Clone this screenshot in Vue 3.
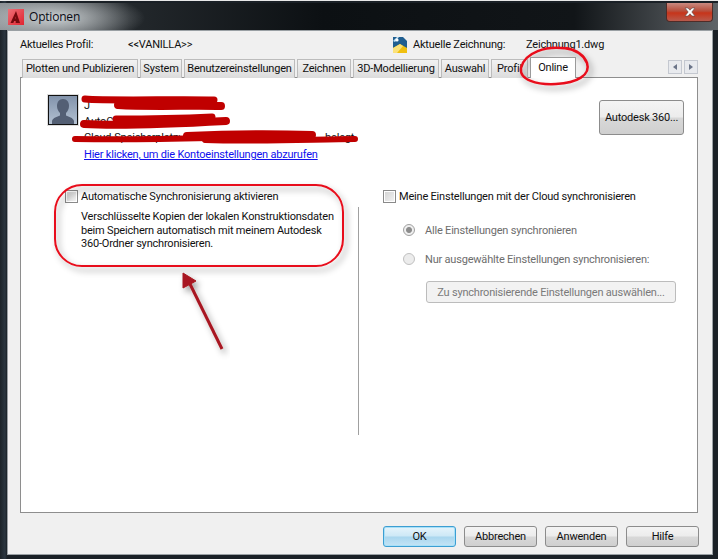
<script setup>
const tabs = [
  { label: 'Plotten und Publizieren', width: 116 },
  { label: 'System', width: 42 },
  { label: 'Benutzereinstellungen', width: 111 },
  { label: 'Zeichnen', width: 54 },
  { label: '3D-Modellierung', width: 86 },
  { label: 'Auswahl', width: 48 },
  { label: 'Profil', width: 37 },
]

const footerButtons = ['OK', 'Abbrechen', 'Anwenden', 'Hilfe']
</script>

<template>
  <div class="window">
    <header class="titlebar">
      <div class="titlebar__brand">
        <svg class="app-icon" width="16" height="16" viewBox="0 0 16 16">
          <defs>
            <linearGradient id="appGlow" x1="0" y1="0" x2="1" y2="1">
              <stop offset="0" stop-color="#ee7078" />
              <stop offset="1" stop-color="#e02430" />
            </linearGradient>
          </defs>
          <rect width="16" height="16" fill="url(#appGlow)" />
          <path d="M8 2 2.500 14h2.800l.9-2h1.500v2h4.300L8 2Zm-.3 7.500H7l.7-2Z" fill="#74090e" />
        </svg>
        <span class="titlebar__text">Optionen</span>
      </div>
      <button type="button" class="close-btn" aria-label="Schließen">
        <svg width="14" height="10" viewBox="0 0 14 10">
          <path d="M2 1h3l2 2.200L9 1h3L8.800 5 12 9H9L7 6.800 5 9H2l3.200-4Z" fill="#fff" stroke="#5a4a4a" stroke-width=".6" />
        </svg>
      </button>
    </header>

    <div class="client">
      <div class="info-row">
        <span class="info-row__profile-label">Aktuelles Profil:</span>
        <span class="info-row__profile">&lt;&lt;VANILLA&gt;&gt;</span>
        <svg class="drawing-icon" width="16" height="17" viewBox="0 0 16 17">
          <path d="M1 1h10l4 4v7H1z" fill="#215f90" />
          <path d="M1 5 5 1h2L3 6z" fill="#b9dcf0" />
          <circle cx="5" cy="4" r="1.600" fill="#fff" />
          <path d="M1 12 8 8l7 4v5H1z" fill="#f0c010" />
          <path d="M1 12 8 8l3 2-6 7H1z" fill="#fbe27a" />
        </svg>
        <span class="info-row__drawing-label">Aktuelle Zeichnung:</span>
        <span>Zeichnung1.dwg</span>
      </div>

      <div class="tabs">
        <div v-for="tab in tabs" :key="tab.label" class="tab" :style="{ width: tab.width + 'px' }">{{ tab.label }}</div>
        <div class="tab tab--active">Online</div>
        <div class="tab-scroll">
          <span class="tab-scroll__btn"><i class="tri tri--left"></i></span>
          <span class="tab-scroll__btn"><i class="tri tri--right"></i></span>
        </div>
      </div>

      <main class="panel">
        <section class="account">
          <div class="avatar">
            <svg width="28" height="28" viewBox="0 0 28 28">
              <defs>
                <linearGradient id="avatarBg" x1="0" y1="0" x2="0" y2="1">
                  <stop offset="0" stop-color="#8293ab" />
                  <stop offset="1" stop-color="#b3c1d2" />
                </linearGradient>
              </defs>
              <rect width="28" height="28" fill="url(#avatarBg)" />
              <path d="M14 3c-4 0-6 3-6 7 0 3 1.500 5.500 3 7v2.500c-3 1.500-7 2-8 5.500v3h22v-3c-1-3.500-5-4-8-5.500V17c1.500-1.500 3-4 3-7 0-4-2-7-6-7Z" fill="#535f74" />
            </svg>
          </div>
          <div class="account__copy">
            <p class="account__line">J</p>
            <p class="account__line">AutoCAD</p>
            <p class="account__line">Cloud-Speicherplatz: <span class="account__tail">belegt</span></p>
            <a class="account__link" href="#">Hier klicken, um die Kontoeinstellungen abzurufen</a>
          </div>
          <button type="button" class="btn btn--account">Autodesk 360...</button>
        </section>

        <section class="columns">
          <div class="col col--left">
            <label class="check">
              <span class="check__box"></span>
              Automatische Synchronisierung aktivieren
            </label>
            <p class="col__desc">
              Verschlüsselte Kopien der lokalen Konstruktionsdaten<br />
              beim Speichern automatisch mit meinem Autodesk<br />
              360-Ordner synchronisieren.
            </p>
          </div>
          <div class="divider"></div>
          <div class="col col--right">
            <label class="check">
              <span class="check__box"></span>
              Meine Einstellungen mit der Cloud synchronisieren
            </label>
            <div class="radio-row radio-row--first">
              <span class="radio radio--on"></span>
              Alle Einstellungen synchronieren
            </div>
            <div class="radio-row">
              <span class="radio"></span>
              Nur ausgewählte Einstellungen synchronisieren:
            </div>
            <button type="button" class="btn btn--disabled">Zu synchronisierende Einstellungen auswählen...</button>
          </div>
        </section>
      </main>

      <footer class="footer">
        <button
          v-for="(label, i) in footerButtons"
          :key="label"
          type="button"
          class="btn btn--footer"
          :class="{ 'btn--default': i === 0 }"
        >{{ label }}</button>
      </footer>
    </div>

    <svg class="markup" width="718" height="559" viewBox="0 0 718 559">
      <defs>
        <filter id="markupShadow" x="-20%" y="-20%" width="140%" height="140%">
          <feDropShadow dx="3" dy="4" stdDeviation="3" flood-color="#000" flood-opacity=".38" />
        </filter>
      </defs>
      <g fill="none" stroke="#c00000" stroke-linecap="round" stroke-linejoin="round">
        <path d="M85 98C110 100 180 98 214 99" stroke-width="7" />
        <path d="M118 104C150 106 195 104 221 105" stroke-width="8" />
        <path d="M84 123C120 125 170 123 226 120" stroke-width="8" />
        <path d="M116 118C150 118 190 117 212 116" stroke-width="7" />
        <path d="M75 138C130 139 170 138 210 137" stroke-width="6" />
        <path d="M187 135C230 133 280 133 312 134" stroke-width="8" />
        <path d="M205 139C260 141 320 138 355 138" stroke-width="6" />
      </g>
      <g filter="url(#markupShadow)" fill="none" stroke="#e8101c">
        <rect x="55" y="184" width="288" height="81" rx="27" stroke-width="2" />
        <path d="M574 49C545 42 524 53 521 67C519 79 537 84 556 83C577 82 591 74 587 62C584 54 576 49 566 47" stroke-width="2.500" />
      </g>
      <g filter="url(#markupShadow)">
        <path d="M222 348 190 283" stroke="#a81820" stroke-width="3" fill="none" />
        <path d="M183 272 183 287 196 280Z" fill="#a81820" stroke="#a81820" />
      </g>
    </svg>
  </div>
</template>

<style>
html,
body {
  margin: 0;
  background: #20262c;
}
</style>

<style scoped>
.window {
  position: relative;
  width: 718px;
  height: 559px;
  display: flex;
  flex-direction: column;
  overflow: hidden;
  box-sizing: border-box;
  padding: 2px 5px 4px 7px;
  background: linear-gradient(90deg, #1c2329 0, #2b3640 5px, #1a2026 7px);
  border-top: 1px solid #e8e8e8;
  font-family: Roboto, "Liberation Sans", Arial, sans-serif;
  font-size: 11px;
  letter-spacing: -0.2px;
  color: #111;
}

.titlebar {
  flex: none;
  height: 27px;
  margin: 0 -5px 0 -7px;
  padding: 0 5px 0 8px;
  display: flex;
  align-items: flex-start;
  justify-content: space-between;
  background:
    radial-gradient(ellipse 90px 26px at 55px 15px, rgba(215, 220, 222, .9), rgba(215, 220, 222, 0) 100%),
    linear-gradient(90deg, #7f8488 0, #23282c 18%, #0c1013 45%, #111518 80%, #5f6468 100%);
}

.titlebar__brand {
  display: flex;
  align-items: center;
  gap: 5px;
  height: 25px;
  padding-top: 1px;
}

.titlebar__text {
  font-family: "Open Sans", sans-serif;
  font-size: 12px;
  color: #0a0a14;
}

.close-btn {
  width: 47px;
  height: 19px;
  margin: 0;
  padding: 0;
  display: grid;
  place-items: center;
  border: 1px solid #4f2c28;
  border-top: 0;
  border-radius: 0 0 4px 4px;
  background: linear-gradient(#c98a80 0, #b84d3a 45%, #c7341a 55%, #b85a4c 100%);
}

.client {
  flex: 1;
  min-height: 0;
  display: flex;
  flex-direction: column;
  border: 1px solid #9aa0a4;
  background: #f0f0f0;
  padding: 0 14px 0 12px;
}

.info-row {
  flex: none;
  height: 27px;
  display: flex;
  align-items: center;
}

.info-row__profile-label {
  width: 108px;
}

.info-row__profile {
  width: 264px;
}

.drawing-icon {
  margin-right: 5px;
}

.info-row__drawing-label {
  width: 113px;
}

.tabs {
  flex: none;
  height: 20px;
  display: flex;
  align-items: flex-end;
  gap: 2px;
  padding-left: 2px;
  margin-bottom: -1px;
  position: relative;
}

.tab {
  box-sizing: border-box;
  height: 19px;
  padding-top: 1px;
  text-align: center;
  white-space: nowrap;
  line-height: 16px;
  border: 1px solid #bcbcbc;
  border-bottom: 0;
  background: linear-gradient(#f2f2f2, #dcdcdc);
}

.tab--active {
  position: relative;
  z-index: 1;
  width: 46px;
  height: 21px;
  padding-top: 0;
  border-color: #9a9a9a;
  line-height: 19px;
  background: #fff;
}

.tab-scroll {
  margin-left: auto;
  align-self: flex-start;
  display: flex;
  gap: 2px;
  padding-top: 2px;
}

.tab-scroll__btn {
  box-sizing: border-box;
  width: 14px;
  height: 14px;
  display: grid;
  place-items: center;
  border: 1px solid #c4c8d0;
  background: #e8eaee;
}

.tri {
  width: 0;
  height: 0;
  border-top: 3px solid transparent;
  border-bottom: 3px solid transparent;
}

.tri--left {
  border-right: 4px solid #6a7488;
}

.tri--right {
  border-left: 4px solid #6a7488;
}

.panel {
  flex: none;
  box-sizing: border-box;
  height: 436px;
  background: #fff;
  border: 1px solid #8e8e8e;
  display: flex;
  flex-direction: column;
}

.account {
  flex: none;
  box-sizing: border-box;
  height: 96px;
  display: flex;
  align-items: flex-start;
  padding: 17px 13px 0 27px;
}

.avatar {
  flex: none;
  width: 28px;
  height: 28px;
  border: 1px solid #111;
  outline: 1px solid #ddd;
  margin-right: 6px;
}

.avatar svg {
  display: block;
}

.account__copy {
  flex: 1;
  padding-top: 3px;
}

.account__line {
  margin: 0;
  height: 16px;
  line-height: 16px;
  white-space: nowrap;
}

.account__tail {
  margin-left: 142px;
}

.account__link {
  display: block;
  margin-top: 1px;
  color: #1010ee;
  text-decoration: underline;
  line-height: 15px;
}

.btn {
  box-sizing: border-box;
  font: inherit;
  letter-spacing: inherit;
  color: #111;
  padding: 0;
  border: 1px solid #8c8c8c;
  border-radius: 3px;
  background: linear-gradient(#f4f4f4 0, #ececec 48%, #d8d8d8 52%, #cfcfcf 100%);
}

.btn--account {
  flex: none;
  width: 85px;
  height: 35px;
  margin-top: 5px;
}

.columns {
  flex: 1;
  min-height: 0;
  display: flex;
  align-items: flex-start;
}

.col {
  box-sizing: border-box;
}

.col--left {
  width: 337px;
  padding: 15px 0 0 44px;
}

.col--right {
  padding: 15px 0 0 24px;
}

.divider {
  flex: none;
  width: 1px;
  height: 228px;
  margin-top: 33px;
  background: #a0a0a0;
}

.check {
  display: flex;
  align-items: center;
  gap: 3px;
  height: 14px;
  white-space: nowrap;
}

.check__box {
  flex: none;
  box-sizing: border-box;
  width: 13px;
  height: 13px;
  border: 1px solid #8a8a8a;
  background: linear-gradient(135deg, #d2d2d2, #f4f4f4);
  box-shadow: inset 0 0 0 1px #fff;
}

.col__desc {
  margin: 7px 0 0 16px;
  line-height: 13.500px;
  white-space: nowrap;
}

.radio-row {
  display: flex;
  align-items: center;
  gap: 10px;
  height: 14px;
  margin: 15px 0 0 20px;
  color: #6d6d6d;
  white-space: nowrap;
}

.radio-row--first {
  margin-top: 20px;
}

.radio {
  flex: none;
  box-sizing: border-box;
  width: 12px;
  height: 12px;
  border: 1px solid #c0c0c0;
  border-radius: 50%;
  background: #ececec;
}

.radio--on {
  background: radial-gradient(circle, #8c8c8c 0, #8c8c8c 2.500px, #efefef 3.500px);
  border-color: #a0a0a0;
}

.btn--disabled {
  display: block;
  width: 250px;
  height: 22px;
  margin: 15px 0 0 43px;
  color: #7a7a7a;
  border-color: #bcbcbc;
  background: #f2f2f2;
}

.footer {
  flex: 1;
  display: flex;
  justify-content: flex-end;
  align-items: flex-start;
  gap: 8px;
  padding-top: 13px;
  margin-right: -1px;
}

.btn--footer {
  width: 73px;
  height: 21px;
}

.btn--default {
  border-color: #3c9ed2;
  background: linear-gradient(#e6f4fb 0, #cde8f6 48%, #a9d6ee 52%, #c4e4f5 100%);
  box-shadow: inset 0 0 0 1px #a8e0f8;
}

.markup {
  position: absolute;
  left: 0;
  top: 0;
  pointer-events: none;
}
</style>
